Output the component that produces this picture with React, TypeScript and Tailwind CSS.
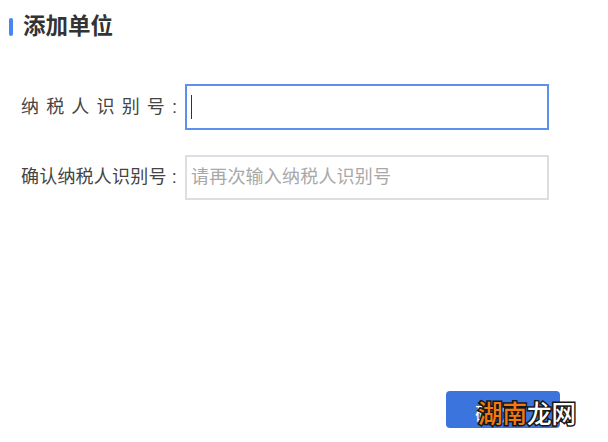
import React from "react";

const cjk = "font-['Liberation_Sans','Noto_Sans_CJK_SC',sans-serif]";

export default function App() {
  return (
    <div className={`relative h-[442px] w-[608px] overflow-hidden bg-white ${cjk}`}>
      {/* header */}
      <div className="flex items-center pl-[9px] pt-[14px]">
        <span className="h-[18px] w-1 rounded-sm bg-[#4a86f0]" />
        <h1 className="ml-[10px] text-[22.5px] leading-[26px] font-bold text-[#333]">添加单位</h1>
      </div>

      {/* form */}
      <div className="mt-[44px] flex flex-col gap-[25px] pl-[21px]">
        <div className="flex items-center">
          <label className="flex w-[164px] justify-between pr-[8px] text-[18px] text-[#444]">
            <span>纳</span>
            <span>税</span>
            <span>人</span>
            <span>识</span>
            <span>别</span>
            <span>号</span>
            <span>:</span>
          </label>
          <div className="flex h-[46px] w-[364px] items-center border-2 border-[#5b8ff0] pl-1">
            <span className="h-[24px] w-px bg-[#333]" />
          </div>
        </div>
        <div className="flex items-center">
          <label className="flex w-[164px] justify-between pr-[8px] text-[18px] tracking-[0.2px] whitespace-nowrap text-[#444]">
            <span>确认纳税人识别号</span>
            <span>:</span>
          </label>
          <input
            readOnly
            placeholder="请再次输入纳税人识别号"
            className="h-[45px] w-[364px] border-2 border-[#dcdee3] pl-1 text-[18px] tracking-[0.2px] outline-none placeholder:text-[#a8a8a8]"
          />
        </div>
      </div>

      {/* footer */}
      <div className="mt-[191px] flex justify-end pr-[48px]">
        <button className="h-[37px] w-[114px] rounded-[4px] bg-[#3a74dc] pt-[10px] pr-[4px] text-[18px] leading-[24px] tracking-[8px] text-white">确定</button>
      </div>

      {/* watermark */}
      <div className="absolute top-[400px] left-[478px] text-[24.5px] leading-[30px] font-medium whitespace-nowrap [-webkit-text-stroke:3px_#161616] [paint-order:stroke_fill]">
        <span className="text-[#f07a10]">湖南</span>
        <span className="text-white">龙网</span>
      </div>
    </div>
  );
}
